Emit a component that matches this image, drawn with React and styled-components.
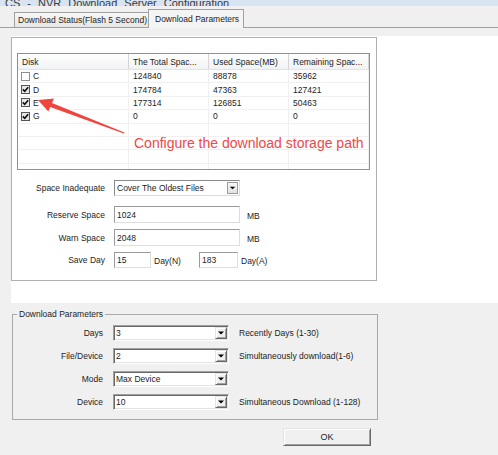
import React from "react";
import styled, { createGlobalStyle } from "styled-components";

const GlobalStyle = createGlobalStyle`
  html, body {
    margin: 0;
    padding: 0;
    background: #f0f0f0;
  }
  body {
    font-family: "Liberation Sans", Arial, sans-serif;
    font-size: 8.5px;
    color: #1c1c1c;
  }
  * {
    box-sizing: border-box;
  }
`;

const disks = [
  { name: "C", checked: false, total: "124840", used: "88878", remain: "35962" },
  { name: "D", checked: true, total: "174784", used: "47363", remain: "127421" },
  { name: "E", checked: true, total: "177314", used: "126851", remain: "50463" },
  { name: "G", checked: true, total: "0", used: "0", remain: "0" },
];

const params = [
  { label: "Days", value: "3", hint: "Recently Days (1-30)" },
  { label: "File/Device", value: "2", hint: "Simultaneously download(1-6)" },
  { label: "Mode", value: "Max Device", hint: "" },
  { label: "Device", value: "10", hint: "Simultaneous Download (1-128)" },
];

const Arrow = () => (
  <svg width="10" height="6" viewBox="0 0 10 6">
    <path d="M2 1.5 L8 1.5 L5 4.5 Z" fill="#000" />
  </svg>
);

const Check = () => (
  <svg width="7" height="7" viewBox="0 0 7 7">
    <path d="M0.8 3.4 L2.7 5.3 L6.2 1.2" fill="none" stroke="#111" strokeWidth="1.6" />
  </svg>
);

const App = () => {
  return (
    <Window>
      <GlobalStyle />
      <TitleBar>
        <TitleText>CS - NVR Download Server Configuration</TitleText>
      </TitleBar>
      <TabStrip>
        <Tab $w={135}>Download Status(Flash 5 Second)</Tab>
        <Tab $w={96} $active>
          Download Parameters
        </Tab>
      </TabStrip>

      <Page>
        <Box>
          <ListView>
            <HeaderRow>
              <HeaderCell>Disk</HeaderCell>
              <HeaderCell>The Total Spac...</HeaderCell>
              <HeaderCell>Used Space(MB)</HeaderCell>
              <HeaderCell>Remaining Spac...</HeaderCell>
            </HeaderRow>
            {disks.map((d) => (
              <Row key={d.name}>
                <Cell $first>
                  <CheckBox $checked={d.checked}>{d.checked && <Check />}</CheckBox>
                  {d.name}
                </Cell>
                <Cell>{d.total}</Cell>
                <Cell>{d.used}</Cell>
                <Cell>{d.remain}</Cell>
              </Row>
            ))}
            {[0, 1, 2, 3].map((i) => (
              <Row key={"e" + i}>
                <Cell />
                <Cell />
                <Cell />
                <Cell />
              </Row>
            ))}
          </ListView>

          <FormRow $mt={10} $h={16}>
            <Label>Space Inadequate</Label>
            <Controls>
              <SelectBox $w={126}>
                <SelectText>Cover The Oldest Files</SelectText>
                <DropButton>
                  <Arrow />
                </DropButton>
              </SelectBox>
            </Controls>
          </FormRow>
          <FormRow $mt={10} $h={17}>
            <Label>Reserve Space</Label>
            <Controls>
              <TextBox $w={126} readOnly defaultValue="1024" />
              <Unit $ml={7}>MB</Unit>
            </Controls>
          </FormRow>
          <FormRow $mt={6} $h={17}>
            <Label>Warn Space</Label>
            <Controls>
              <TextBox $w={126} readOnly defaultValue="2048" />
              <Unit $ml={7}>MB</Unit>
            </Controls>
          </FormRow>
          <FormRow $mt={6} $h={16}>
            <Label>Save Day</Label>
            <Controls>
              <TextBox $w={37} readOnly defaultValue="15" />
              <Unit $ml={3} $w={45}>
                Day(N)
              </Unit>
              <TextBox $w={39} readOnly defaultValue="183" />
              <Unit $ml={3}>Day(A)</Unit>
            </Controls>
          </FormRow>

          <Annotation viewBox="0 0 366 244">
            <polygon
              points="26,62 42,60.5 40,65 112.4,94.4 111.8,95.6 38.2,69 36.3,73.5"
              fill="#f0453f"
            />
          </Annotation>
          <Note>Configure the download storage path</Note>
        </Box>
      </Page>

      <Group>
        <Legend>Download Parameters</Legend>
        <ParamGrid>
          {params.map((p) => (
            <React.Fragment key={p.label}>
              <Label>{p.label}</Label>
              <ClassicSelect>
                <SelectText $pad={0}>{p.value}</SelectText>
                <ClassicButton>
                  <Arrow />
                </ClassicButton>
              </ClassicSelect>
              <Hint>{p.hint}</Hint>
            </React.Fragment>
          ))}
        </ParamGrid>
      </Group>

      <OkButton>OK</OkButton>
    </Window>
  );
};

export default App;

const Window = styled.div`
  width: 498px;
  height: 455px;
  overflow: hidden;
  display: flex;
  flex-direction: column;
`;

const TitleBar = styled.div`
  height: 6px;
  overflow: hidden;
  background: #d8e4f2;
  display: flex;
  align-items: flex-end;
  padding-left: 5px;
`;

const TitleText = styled.span`
  font-size: 11px;
  line-height: 11px;
  color: #3a3a3a;
  margin-bottom: -3px;
  word-spacing: 4px;
  white-space: nowrap;
`;

const TabStrip = styled.div`
  height: 22px;
  display: flex;
  align-items: flex-end;
  padding-left: 14px;
  border-bottom: 1px solid #a0a0a0;
`;

const Tab = styled.div`
  width: ${(p) => p.$w}px;
  height: ${(p) => (p.$active ? 19 : 15)}px;
  margin-left: ${(p) => (p.$active ? -1 : 0)}px;
  margin-bottom: ${(p) => (p.$active ? -1 : 0)}px;
  padding-left: ${(p) => (p.$active ? 6 : 3)}px;
  display: flex;
  align-items: center;
  white-space: nowrap;
  border: 1px solid #a0a0a0;
  border-bottom: none;
  background: ${(p) =>
    p.$active ? "#f4f4f4" : "linear-gradient(#f7f7f7, #e6e6e6)"};
`;

const Page = styled.div`
  margin: 8px 0 0 11px;
  height: 267px;
  padding-top: 1px;
  background: #fff;
`;

const Box = styled.div`
  position: relative;
  width: 366px;
  height: 244px;
  border: 1px solid #b0b0b0;
`;

const ListView = styled.div`
  width: 353px;
  height: 117px;
  margin: 15px 0 0 5px;
  border: 1px solid #8e9298;
  overflow: hidden;
  background: #fff;
`;

const HeaderRow = styled.div`
  display: grid;
  grid-template-columns: 111px 80px 80px 80px;
  height: 16px;
  background: linear-gradient(#ffffff, #f1f2f4);
  border-bottom: 1px solid #e2e3e5;
`;

const HeaderCell = styled.div`
  display: flex;
  align-items: center;
  padding-left: 4px;
  border-right: 1px solid #d5d5d5;
  white-space: nowrap;
  overflow: hidden;
`;

const Row = styled.div`
  display: grid;
  grid-template-columns: 111px 80px 80px 80px;
  height: 13.4px;
  border-bottom: 1px solid #f0f0f0;
`;

const Cell = styled.div`
  display: flex;
  align-items: center;
  gap: 3px;
  padding-left: ${(p) => (p.$first ? 3 : 4)}px;
  border-right: 1px solid #f0f0f0;
  white-space: nowrap;
`;

const CheckBox = styled.span`
  width: 9px;
  height: 9px;
  display: flex;
  align-items: center;
  justify-content: center;
  border: 1px solid ${(p) => (p.$checked ? "#555" : "#8f8f8f")};
  background: ${(p) => (p.$checked ? "#e8e8e8" : "#fff")};
`;

const FormRow = styled.div`
  display: grid;
  grid-template-columns: 93px 1fr;
  column-gap: 9px;
  align-items: center;
  height: ${(p) => p.$h}px;
  margin-top: ${(p) => p.$mt}px;
`;

const Label = styled.div`
  text-align: right;
  white-space: nowrap;
`;

const Controls = styled.div`
  display: flex;
  align-items: center;
  height: 100%;
`;

const SelectBox = styled.div`
  width: ${(p) => p.$w}px;
  height: 100%;
  display: flex;
  align-items: center;
  background: #fff;
  border: 1px solid;
  border-color: #8a8a8a #dcdcdc #dcdcdc #8a8a8a;
`;

const SelectText = styled.span`
  flex: 1;
  padding-left: ${(p) => (p.$pad ?? 2)}px;
  white-space: nowrap;
`;

const DropButton = styled.span`
  width: 11px;
  height: 12px;
  margin-right: 1px;
  display: flex;
  align-items: center;
  justify-content: center;
  background: linear-gradient(#f6f6f6, #e2e2e2);
  border: 1px solid #9c9c9c;
`;

const TextBox = styled.input`
  width: ${(p) => p.$w}px;
  height: 100%;
  padding: 0 2px;
  font: inherit;
  color: inherit;
  outline: none;
  background: #fff;
  border: 1px solid;
  border-color: #9a9a9a #dedede #dedede #9a9a9a;
`;

const Unit = styled.span`
  margin-left: ${(p) => p.$ml}px;
  width: ${(p) => (p.$w ? `${p.$w}px` : "auto")};
  padding-top: 2px;
  white-space: nowrap;
`;

const Annotation = styled.svg`
  position: absolute;
  left: 0;
  top: 0;
  width: 366px;
  height: 244px;
  pointer-events: none;
`;

const Note = styled.div`
  position: absolute;
  left: 122px;
  top: 97px;
  font-size: 14px;
  line-height: 16px;
  color: #f04848;
  white-space: nowrap;
`;

const Group = styled.fieldset`
  width: 366px;
  margin: 6px 0 0 12px;
  padding: 5px 0 9px 0;
  border: 1px solid #a9a9a9;
  min-inline-size: 0;
`;

const Legend = styled.legend`
  margin-left: 4px;
  padding: 0 2px;
  line-height: 11px;
  font-size: 8.5px;
`;

const ParamGrid = styled.div`
  display: grid;
  grid-template-columns: 90px 116px auto;
  grid-auto-rows: 16px;
  column-gap: 10px;
  row-gap: 7px;
  align-items: center;
`;

const ClassicSelect = styled.div`
  height: 16px;
  display: flex;
  align-items: center;
  background: #fff;
  border: 1px solid;
  border-color: #a0a0a0 #fff #fff #a0a0a0;
  box-shadow: inset 1px 1px #696969, inset -1px -1px #e3e3e3;
  padding: 1px 1px 1px 2px;
`;

const ClassicButton = styled.span`
  width: 12px;
  height: 12px;
  display: flex;
  align-items: center;
  justify-content: center;
  background: #f0f0f0;
  border: 1px solid;
  border-color: #e3e3e3 #696969 #696969 #e3e3e3;
  box-shadow: inset 1px 1px #fff, inset -1px -1px #a0a0a0;
`;

const Hint = styled.div`
  white-space: nowrap;
`;

const OkButton = styled.button`
  width: 88px;
  height: 18px;
  margin: 8px 0 0 283px;
  padding: 0;
  font: inherit;
  font-size: 9px;
  color: #1c1c1c;
  background: #f0f0f0;
  border: 1px solid;
  border-color: #e3e3e3 #696969 #696969 #e3e3e3;
  box-shadow: inset 1px 1px #fff, inset -1px -1px #a0a0a0;
`;
